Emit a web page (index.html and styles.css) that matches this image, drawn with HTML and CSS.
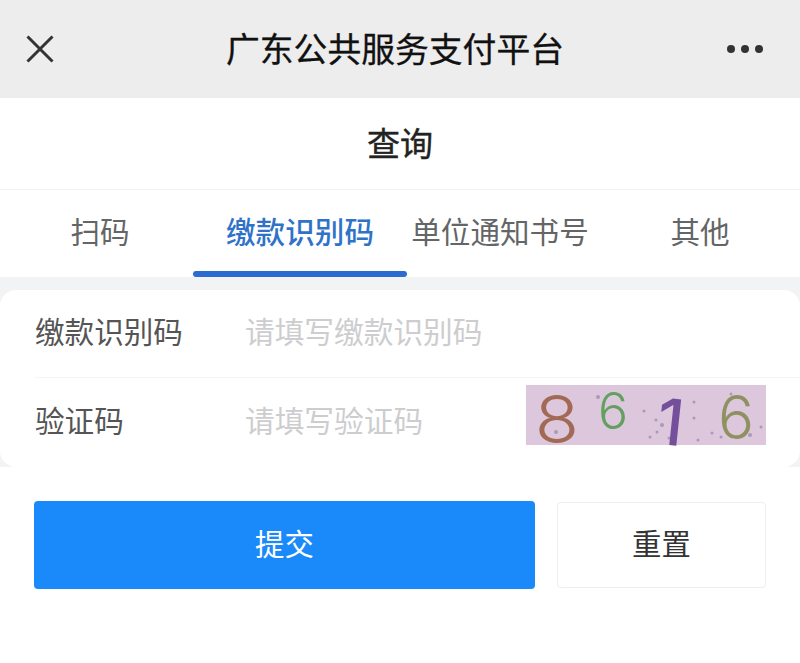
FILE: index.html
```html
<!DOCTYPE html>
<html lang="zh-CN">
<head>
    <meta charset="UTF-8">
    <meta name="viewport" content="width=device-width, initial-scale=1.0">
    <title>广东公共服务支付平台</title>
    <link rel="stylesheet" href="styles.css">
</head>
<body>
    <header class="nav-bar">
        <svg class="nav-close" width="28" height="28" viewBox="0 0 28 28">
            <path d="M1.5 1.5L26.5 26.5M26.5 1.5L1.5 26.5"/>
        </svg>
        <h1>广东公共服务支付平台</h1>
        <div class="nav-more"><i></i><i></i><i></i></div>
    </header>

    <div class="page-title">查询</div>

    <nav class="tabs">
        <a class="tab">扫码</a>
        <a class="tab active">缴款识别码</a>
        <a class="tab">单位通知书号</a>
        <a class="tab">其他</a>
    </nav>

    <div class="form-wrap">
        <form class="card">
            <label class="field">
                <span class="field-label">缴款识别码</span>
                <input type="text" placeholder="请填写缴款识别码">
            </label>
            <label class="field">
                <span class="field-label">验证码</span>
                <input type="text" placeholder="请填写验证码">
                <svg class="captcha" width="240" height="60" viewBox="0 0 240 60">
                    <rect width="240" height="60" fill="#dcc7dd"/>
                    <g fill="#a99bb5">
                        <circle cx="22" cy="14" r="1.5"/>
                        <circle cx="72" cy="12" r="2"/>
                        <circle cx="30" cy="47" r="2"/>
                        <circle cx="118" cy="26" r="1.5"/>
                        <circle cx="130" cy="35" r="1.5"/>
                        <circle cx="143" cy="53" r="1.5"/>
                        <circle cx="136" cy="40" r="2"/>
                        <circle cx="131" cy="47" r="1.5"/>
                        <circle cx="124" cy="52" r="1.5"/>
                        <circle cx="168" cy="33" r="1.5"/>
                        <circle cx="172" cy="55" r="1.5"/>
                        <circle cx="186" cy="48" r="1.5"/>
                        <circle cx="195" cy="52" r="1.5"/>
                        <circle cx="224" cy="50" r="2"/>
                        <circle cx="235" cy="42" r="1.5"/>
                        <circle cx="205" cy="9" r="1.5"/>
                        <circle cx="168" cy="17" r="1.5"/>
                    </g>
                    <g class="captcha-digits">
                        <text x="8" y="58" font-size="66" fill="#a26a55" transform="scale(1.1 1)">8</text>
                        <text x="72" y="44" font-size="50" fill="#63a05f">6</text>
                        <text x="131" y="60" font-size="64" fill="#74509c" class="heavy" transform="rotate(6 145 40)">1</text>
                        <text x="192" y="54" font-size="60" fill="#8f9160">6</text>
                    </g>
                </svg>
            </label>
        </form>
    </div>

    <div class="actions">
        <button type="button" class="btn btn-primary">提交</button>
        <button type="button" class="btn btn-plain">重置</button>
    </div>
</body>
</html>
```

FILE: styles.css
```css
* {
    box-sizing: border-box;
    margin: 0;
    padding: 0;
}

body {
    font-family: "Noto Sans CJK SC", sans-serif;
    background-color: #fff;
    color: #333;
}

.nav-bar {
    display: flex;
    align-items: center;
    justify-content: space-between;
    height: 98px;
    padding: 0 37px 0 26px;
    background-color: #ededed;
}

.nav-bar h1 {
    margin: 0 0 3px 9px;
    font-size: 33.8px;
    font-weight: 400;
    color: #111;
    -webkit-text-stroke: 0.3px #111;
}

.nav-close {
    fill: none;
    stroke: #333;
    stroke-width: 3;
}

.nav-more {
    display: flex;
    gap: 6px;
}

.nav-more i {
    width: 8px;
    height: 8px;
    border-radius: 50%;
    background-color: #333;
}

.page-title {
    height: 92px;
    line-height: 88px;
    text-align: center;
    font-size: 33px;
    font-weight: 400;
    color: #222;
    -webkit-text-stroke: 0.4px #222;
    border-bottom: 1px solid #f2f2f2;
}

.tabs {
    display: grid;
    grid-template-columns: repeat(4, 200px);
    height: 87px;
}

.tab {
    position: relative;
    line-height: 82px;
    text-align: center;
    font-size: 29.6px;
    color: #646566;
}

.tab.active {
    color: #2f73c9;
    font-weight: 500;
}

.tab.active::after {
    content: "";
    position: absolute;
    left: -7px;
    right: -7px;
    bottom: 0;
    height: 6px;
    border-radius: 3px;
    background-color: #2b6cd0;
}

.form-wrap {
    padding-top: 13px;
    background-color: #f2f3f5;
}

.card {
    height: 177px;
    padding-left: 35px;
    background-color: #fff;
    border-radius: 16px;
}

.field {
    display: flex;
    align-items: center;
    height: 87px;
    padding-bottom: 6px;
}

.field + .field {
    height: 90px;
    padding-bottom: 7px;
    border-top: 1px solid #f6f6f6;
}

.field-label {
    width: 210px;
    flex-shrink: 0;
    font-size: 29.6px;
    color: #555;
}

.field input {
    flex: 1;
    min-width: 0;
    border: none;
    outline: none;
    background: none;
    font-family: inherit;
    font-size: 29.7px;
    color: #333;
}

.field input::placeholder {
    color: #cdcdcf;
}

.captcha {
    flex-shrink: 0;
    margin: 0 34px 8px 0;
    overflow: visible;
    filter: blur(0.6px);
}

.captcha-digits {
    font-family: Inter, sans-serif;
    font-weight: 300;
}

.captcha-digits .heavy {
    font-weight: 500;
}

.actions {
    display: flex;
    gap: 22px;
    padding: 34px 34px 0;
}

.btn {
    height: 88px;
    padding-bottom: 6px;
    border-radius: 4px;
    font-family: inherit;
    font-size: 29.4px;
}

.btn-primary {
    width: 501px;
    border: none;
    background-color: #1a89fa;
    color: #fff;
}

.btn-plain {
    width: 209px;
    margin-top: 1px;
    height: 86px;
    border: 1px solid #eeeeee;
    background-color: #fff;
    color: #333;
}
```
